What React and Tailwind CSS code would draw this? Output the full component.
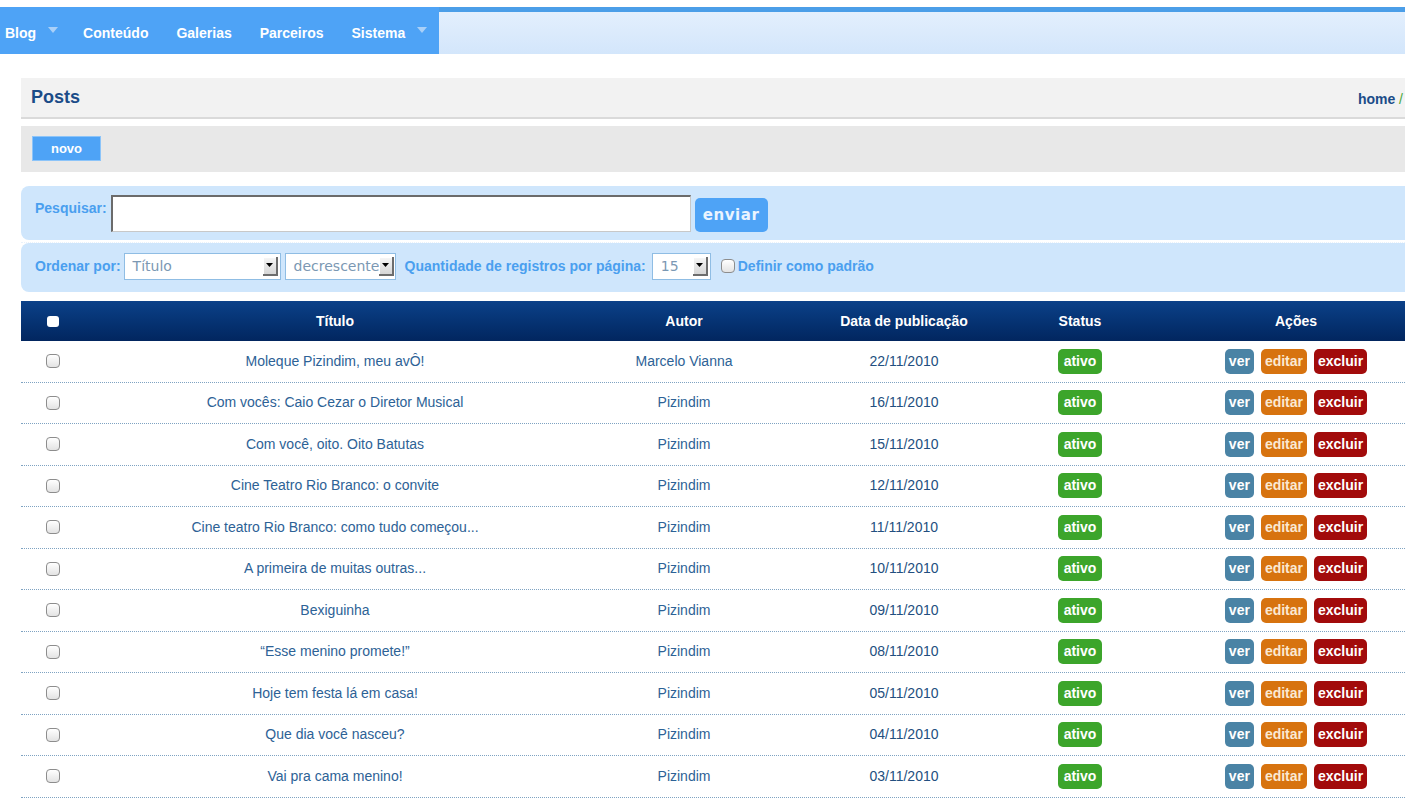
import React from "react";

const rows = [
  ["Moleque Pizindim, meu avÔ!", "Marcelo Vianna", "22/11/2010"],
  ["Com vocês: Caio Cezar o Diretor Musical", "Pizindim", "16/11/2010"],
  ["Com você, oito. Oito Batutas", "Pizindim", "15/11/2010"],
  ["Cine Teatro Rio Branco: o convite", "Pizindim", "12/11/2010"],
  ["Cine teatro Rio Branco: como tudo começou...", "Pizindim", "11/11/2010"],
  ["A primeira de muitas outras...", "Pizindim", "10/11/2010"],
  ["Bexiguinha", "Pizindim", "09/11/2010"],
  ["“Esse menino promete!”", "Pizindim", "08/11/2010"],
  ["Hoje tem festa lá em casa!", "Pizindim", "05/11/2010"],
  ["Que dia você nasceu?", "Pizindim", "04/11/2010"],
  ["Vai pra cama menino!", "Pizindim", "03/11/2010"],
];

function Caret() {
  return (
    <svg width="10" height="6" viewBox="0 0 10 6" className="ml-[12px] mt-[-6px]">
      <path d="M0 0 L10 0 L5 6 Z" fill="#a9d0f8" />
    </svg>
  );
}

function SelectBox({ text, width }) {
  return (
    <div
      className="flex h-[27px] items-center justify-between border border-[#8fbde4] bg-white pl-[8px] pr-[2px]"
      style={{ width }}
    >
      <span className="font-['DejaVu_Sans',sans-serif] text-[14px] text-[#7b98b3]">{text}</span>
      <span className="flex h-[19px] w-[15px] shrink-0 items-center justify-center border-r-2 border-b-2 border-[#6d6d6d] bg-gradient-to-b from-[#f7f7f7] to-[#d6d6d6] shadow-[inset_1px_1px_0_#fff]">
        <svg width="7" height="4" viewBox="0 0 7 4">
          <path d="M0 0 L7 0 L3.5 4 Z" fill="#000" />
        </svg>
      </span>
    </div>
  );
}

function RowCheck() {
  return (
    <span className="block h-[14px] w-[14px] rounded-[4px] border border-[#8d8d8d] bg-gradient-to-b from-white to-[#e3e3e3]" />
  );
}

export default function App() {
  return (
    <div className="h-[800px] w-[1405px] overflow-hidden bg-white font-['Liberation_Sans',Arial,sans-serif]">
      {/* nav */}
      <div className="mt-[7px] flex h-[47px] w-full">
        <div className="flex h-full w-[439px] items-center bg-[#4ea3f6] pt-[5px] text-[14px] font-bold text-white">
          <span className="ml-[5px] flex items-center">
            Blog
            <Caret />
          </span>
          <span className="ml-[25px]">Conteúdo</span>
          <span className="ml-[28px]">Galerias</span>
          <span className="ml-[28px]">Parceiros</span>
          <span className="ml-[28px] flex items-center">
            Sistema
            <Caret />
          </span>
        </div>
        <div className="h-full flex-1 border-t-[5px] border-[#4b9ee8] bg-gradient-to-b from-[#e3effd] to-[#d3e6fb]" />
      </div>

      {/* main */}
      <div className="ml-[21px] mt-[24px] w-[1436px]">
        <div className="flex h-[41px] items-center justify-between border-b-2 border-[#dadada] bg-[#f2f2f2] pl-[10px] pr-[54px]">
          <span className="text-[18px] font-bold text-[#1b4c88]">Posts</span>
          <span className="mt-[3px] text-[14px] font-bold text-[#1b4c88]">
            home <span className="font-normal text-[#4aa83a]">/</span>
          </span>
        </div>

        <div className="mt-[7px] h-[46px] bg-[#e8e8e8] pl-[11px] pt-[10px]">
          <div className="flex h-[25px] w-[69px] items-center justify-center border border-[#8cc4f9] bg-[#4ea3f6] text-[13px] font-bold text-white">
            novo
          </div>
        </div>

        {/* search */}
        <div className="mt-[14px]">
          <div className="flex h-[54px] items-start rounded-lg bg-[#cfe6fc] pl-[14px] pt-[9px]">
            <span className="mt-[3px] text-[14px] font-bold text-[#4a9fef]">Pesquisar:</span>
            <div className="ml-[4px] h-[37px] w-[580px] border border-t-2 border-l-2 border-[#c8c8c8] border-t-[#6b6b6b] border-l-[#6b6b6b] bg-white" />
            <div className="ml-[4px] mt-[3px] flex h-[34px] w-[73px] items-center justify-center rounded-[5px] bg-[#4ea3f6] font-['DejaVu_Sans',sans-serif] text-[15px] font-bold tracking-[0.6px] text-[#eaf4ff]">
              enviar
            </div>
          </div>
          <div className="h-[3px] border-b border-dotted border-[#e9f2fb] bg-white" />
          <div className="flex h-[49px] items-center rounded-lg bg-[#cfe6fc] pl-[14px] pb-[3px]">
            <span className="text-[14px] font-bold text-[#4a9fef]">Ordenar por:</span>
            <div className="ml-[3px]">
              <SelectBox text="Título" width={157} />
            </div>
            <div className="ml-[4px]">
              <SelectBox text="decrescente" width={111} />
            </div>
            <span className="ml-[9px] text-[14px] font-bold text-[#4a9fef]">
              Quantidade de registros por página:
            </span>
            <div className="ml-[6px]">
              <SelectBox text="15" width={59} />
            </div>
            <span className="ml-[10px] block h-[14px] w-[14px] rounded-[4px] border border-[#8d8d8d] bg-gradient-to-b from-white to-[#e3e3e3]" />
            <span className="ml-[3px] text-[14px] font-bold text-[#4a9fef]">Definir como padrão</span>
          </div>
        </div>

        {/* table */}
        <div className="mt-[9px]">
          <div className="grid h-[40px] grid-cols-[64px_500px_198px_242px_110px_322px] items-center bg-gradient-to-b from-[#0c4189] to-[#02265f] text-center text-[14px] font-bold text-white">
            <div className="flex justify-center">
              <span className="block h-[11px] w-[12px] rounded-[3px] bg-white" />
            </div>
            <div>Título</div>
            <div>Autor</div>
            <div>Data de publicação</div>
            <div>Status</div>
            <div>Ações</div>
          </div>
          {rows.map(([t, a, d], i) => (
            <div
              key={i}
              className="grid h-[41.5px] grid-cols-[64px_500px_198px_242px_110px_322px] items-center border-b border-dotted border-[#7fa3c2] text-center text-[14px]"
            >
              <div className="flex justify-center">
                <RowCheck />
              </div>
              <div className="text-[#2d6296]">{t}</div>
              <div className="text-[#2d6296]">{a}</div>
              <div className="text-[#234f80]">{d}</div>
              <div className="flex justify-center">
                <span className="flex h-[25px] items-center rounded-[5px] bg-[#3ca52b] px-[6px] font-bold text-white">
                  ativo
                </span>
              </div>
              <div className="flex justify-center gap-[7px]">
                <span className="flex h-[25px] items-center rounded-[5px] bg-[#4a83a5] px-[4px] font-bold text-white">
                  ver
                </span>
                <span className="flex h-[25px] items-center rounded-[5px] bg-[#d7730f] px-[4px] font-bold text-[#fbe9d2]">
                  editar
                </span>
                <span className="flex h-[25px] items-center rounded-[5px] bg-[#a20b0b] px-[4px] font-bold text-white">
                  excluir
                </span>
              </div>
            </div>
          ))}
        </div>
      </div>
    </div>
  );
}
